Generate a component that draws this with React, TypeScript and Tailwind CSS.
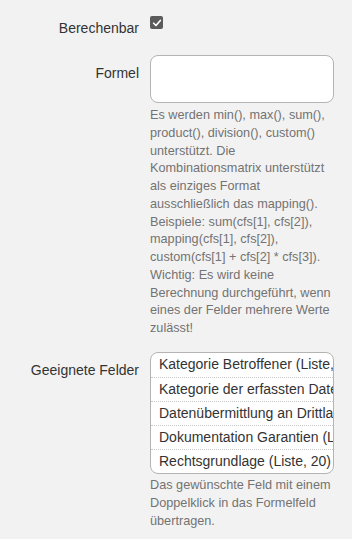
import React from "react";

const fields = [
  "Kategorie Betroffener (Liste, 12)",
  "Kategorie der erfassten Daten (Liste, 14)",
  "Datenübermittlung an Drittland (Liste, 3)",
  "Dokumentation Garantien (Liste, 5)",
  "Rechtsgrundlage (Liste, 20)",
];

const App = () => {
  return (
    <div
      className="min-h-[539px] w-[352px] bg-[#f2f2f2] text-[#333]"
      style={{ fontFamily: '"Liberation Sans", Arial, sans-serif' }}
    >
      {/* Berechenbar */}
      <div className="flex pt-[16px]">
        <label className="w-[139px] pt-[2px] text-right text-[14px] leading-[20px]">
          Berechenbar
        </label>
        <div className="ml-[11px]">
          <span className="flex h-[13px] w-[13px] items-center justify-center rounded-[2px] bg-[#5b5b5b]">
            <svg viewBox="0 0 12 12" className="h-[10px] w-[10px]">
              <path
                d="M2 6.3 L4.8 9 L10 3"
                fill="none"
                stroke="white"
                strokeWidth="2"
                strokeLinecap="round"
                strokeLinejoin="round"
              />
            </svg>
          </span>
        </div>
      </div>

      {/* Formel */}
      <div className="mt-[17px] flex">
        <label className="w-[139px] pt-[8px] text-right text-[14px] leading-[20px]">
          Formel
        </label>
        <div className="ml-[11px] w-[184px]">
          <textarea className="block h-[48px] w-[184px] resize-none rounded-[8px] border border-[#b4b4b4] bg-white" />
          <p className="mt-[4px] w-[190px] text-[12.7px] leading-[17.75px] text-[#737373]">
            Es werden min(), max(), sum(), product(), division(), custom()
            unterstützt. Die Kombinationsmatrix unterstützt als einziges Format
            ausschließlich das mapping(). Beispiele: sum(cfs[1], cfs[2]),
            mapping(cfs[1], cfs[2]), custom(cfs[1] + cfs[2] * cfs[3]). Wichtig:
            Es wird keine Berechnung durchgeführt, wenn eines der Felder
            mehrere Werte zulässt!
          </p>
        </div>
      </div>

      {/* Geeignete Felder */}
      <div className="mt-[14px] flex">
        <label className="w-[139px] pt-[8px] text-right text-[14px] leading-[20px]">
          Geeignete Felder
        </label>
        <div className="ml-[11px] w-[184px]">
          <div className="overflow-hidden rounded-[8px] border border-[#b4b4b4] bg-white">
            {fields.map((f, i) => (
              <div
                key={f}
                className={
                  "h-[24px] overflow-hidden whitespace-nowrap pl-[8px] text-[14px] leading-[23px] " +
                  (i > 0 ? "border-t border-dotted border-[#c8c8c8]" : "")
                }
              >
                {f}
              </div>
            ))}
          </div>
          <p className="mt-[2px] w-[190px] text-[12.7px] leading-[18px] text-[#737373]">
            Das gewünschte Feld mit einem Doppelklick in das Formelfeld
            übertragen.
          </p>
        </div>
      </div>
    </div>
  );
};

export default App;
